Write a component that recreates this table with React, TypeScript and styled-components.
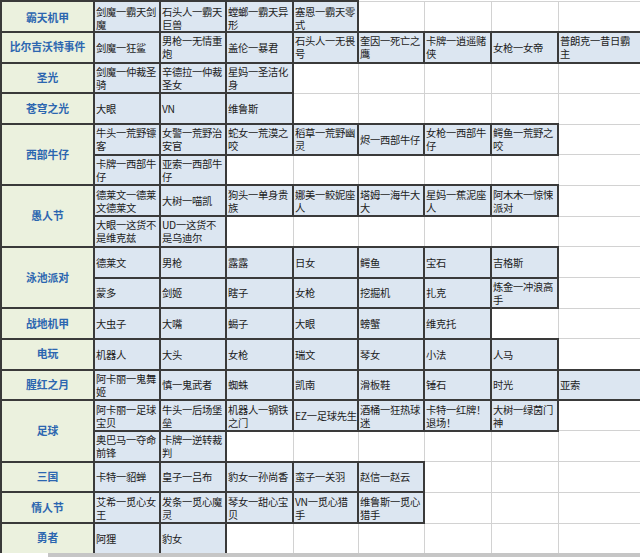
import React from "react";
import styled, { createGlobalStyle } from "styled-components";

type Group = { name: string; rows: string[][] };

const groups: Group[] = [
    { name: "霸天机甲", rows: [["剑魔一霸天剑魔", "石头人一霸天巨兽", "螳螂一霸天异形", "塞恩一霸天零式"]] },
    {
        name: "比尔吉沃特事件",
        rows: [["剑魔一狂鲨", "男枪一无情重炮", "盖伦一暴君", "石头人一无畏号", "奎因一死亡之鹰", "卡牌一逍遥赌侠", "女枪一女帝", "普朗克一昔日霸主"]],
    },
    { name: "圣光", rows: [["剑魔一仲裁圣骑", "辛德拉一仲裁圣女", "星妈一圣洁化身"]] },
    { name: "苍穹之光", rows: [["大眼", "VN", "维鲁斯"]] },
    {
        name: "西部牛仔",
        rows: [
            ["牛头一荒野镖客", "女警一荒野治安官", "蛇女一荒漠之咬", "稻草一荒野幽灵", "烬一西部牛仔", "女枪一西部牛仔", "鳄鱼一荒野之咬"],
            ["卡牌一西部牛仔", "亚索一西部牛仔"],
        ],
    },
    {
        name: "愚人节",
        rows: [
            ["德莱文一德莱文德莱文", "大树一喵凯", "狗头一单身贵族", "娜美一鲛妮座人", "塔姆一海牛大大", "星妈一蕉泥座人", "阿木木一惊悚派对"],
            ["大眼一这货不是维克兹", "UD一这货不是乌迪尔"],
        ],
    },
    {
        name: "泳池派对",
        rows: [
            ["德莱文", "男枪", "露露", "日女", "鳄鱼", "宝石", "吉格斯"],
            ["蒙多", "剑姬", "瞎子", "女枪", "挖掘机", "扎克", "炼金一冲浪高手"],
        ],
    },
    { name: "战地机甲", rows: [["大虫子", "大嘴", "蝎子", "大眼", "螃蟹", "维克托"]] },
    { name: "电玩", rows: [["机器人", "大头", "女枪", "瑞文", "琴女", "小法", "人马"]] },
    { name: "腥红之月", rows: [["阿卡丽一鬼舞姬", "慎一鬼武者", "蜘蛛", "凯南", "滑板鞋", "锤石", "时光", "亚索"]] },
    {
        name: "足球",
        rows: [
            ["阿卡丽一足球宝贝", "牛头一后场堡垒", "机器人一钢铁之门", "EZ一足球先生", "酒桶一狂热球迷", "卡特一红牌！退场！", "大树一绿茵门神"],
            ["奥巴马一夺命前锋", "卡牌一逆转裁判"],
        ],
    },
    { name: "三国", rows: [["卡特一貂蝉", "皇子一吕布", "豹女一孙尚香", "蛮子一关羽", "赵信一赵云"]] },
    { name: "情人节", rows: [["艾希一觅心女王", "发条一觅心魔灵", "琴女一甜心宝贝", "VN一觅心猎手", "维鲁斯一觅心猎手"]] },
    { name: "勇者", rows: [["阿狸", "豹女"]] },
];

const colWidths = [93, 66, 66, 67, 65, 66, 67, 67, 83];

export default function App() {
    return (
        <>
            <GlobalStyle />
            <Window>
                <SheetArea>
                    <Sheet>
                        <colgroup>
                            {colWidths.map((w, i) => (
                                <col key={i} style={{ width: w }} />
                            ))}
                        </colgroup>
                        <tbody>
                            {groups.map((g, gi) =>
                                g.rows.map((row, ri) => (
                                    <Row key={`${gi}-${ri}`} $first={gi === 0}>
                                        {ri === 0 && <CatCell rowSpan={g.rows.length}>{g.name}</CatCell>}
                                        {Array.from({ length: 8 }).map((_, ci) => {
                                            const text = row[ci] ?? "";
                                            return (
                                                <DataCell key={ci} $filled={text !== ""} $last={ci === 7}>
                                                    {text}
                                                </DataCell>
                                            );
                                        })}
                                    </Row>
                                ))
                            )}
                        </tbody>
                    </Sheet>
                </SheetArea>
                <ScrollStrip>
                    <ScrollCorner />
                    <ScrollTrack />
                </ScrollStrip>
            </Window>
        </>
    );
}

const GlobalStyle = createGlobalStyle`
    html, body {
        margin: 0;
        padding: 0;
        background: #ffffff;
        overflow: hidden;
    }
    body {
        font-family: "Noto Sans CJK SC", "Noto Sans", sans-serif;
    }
`;

const Window = styled.div`
    display: flex;
    flex-direction: column;
    width: 640px;
    height: 557px;
    overflow: hidden;
`;

const SheetArea = styled.div`
    flex: 1;
    overflow: hidden;
`;

const Sheet = styled.table`
    border-collapse: collapse;
    table-layout: fixed;
    width: 640px;
`;

const Row = styled.tr<{ $first: boolean }>`
    height: 30.7px;

    td {
        padding-top: ${(p) => (p.$first ? "3px" : "0")};
    }
`;

const CatCell = styled.td`
    background: #ebf1de;
    border: 2px solid #3a3a3a;
    color: #2c66b0;
    font-weight: 700;
    font-size: 10.8px;
    line-height: 13px;
    text-align: center;
    vertical-align: middle;
    overflow: hidden;
`;

const DataCell = styled.td<{ $filled: boolean; $last: boolean }>`
    background: ${(p) => (p.$filled ? "#dce6f1" : "#ffffff")};
    border: ${(p) => (p.$filled ? "2px solid #3a3a3a" : "1px solid #d2d2d2")};
    color: #1c1c1c;
    font-size: 10.3px;
    letter-spacing: -0.3px;
    line-height: 13px;
    padding: 0 ${(p) => (p.$last ? "4px" : "0")} 0 1px;
    vertical-align: middle;
    text-align: left;
    word-break: break-all;
    overflow: hidden;
`;

const ScrollStrip = styled.div`
    display: flex;
    height: 4px;
`;

const ScrollCorner = styled.div`
    width: 48px;
    background: #ffffff;
`;

const ScrollTrack = styled.div`
    flex: 1;
    background: #c6c6c6;
`;
